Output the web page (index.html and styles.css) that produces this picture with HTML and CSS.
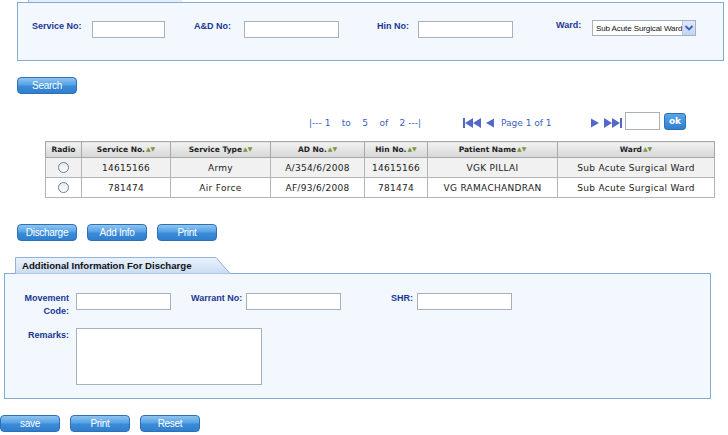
FILE: index.html
```html
<!DOCTYPE html>
<html>
<head>
<meta charset="utf-8">
<title>Discharge</title>
<link rel="stylesheet" href="styles.css">
</head>
<body>
<div class="tabstub"></div>
<div class="panel search-panel">
  <div class="fields">
    <label class="lbl l1">Service No:</label><input class="txt w73" type="text">
    <label class="lbl l2">A&amp;D No:</label><input class="txt w95" type="text">
    <label class="lbl l3">Hin No:</label><input class="txt w95" type="text">
    <label class="lbl l4">Ward:</label>
    <div class="select"><span class="sel-text">Sub Acute Surgical Ward</span><span class="sel-arrow"><svg width="10" height="8" viewBox="0 0 10 8"><path d="M1.5 2 L5 5.5 L8.5 2" fill="none" stroke="#3b5fc4" stroke-width="1.8"/></svg></span></div>
  </div>
</div>
<div class="btnrow search-row"><button class="btn">Search</button></div>
<div class="pager">
  <span class="range">|--- 1 &nbsp;&nbsp; to &nbsp;&nbsp; 5 &nbsp;&nbsp; of &nbsp;&nbsp; 2 ---|</span>
  <svg class="ic first" width="19" height="10" viewBox="0 0 19 10"><rect x="0" y="0" width="2" height="10" fill="#5468cc"/><path d="M2 5 L10 0 L10 10 Z M10 5 L18 0 L18 10 Z" fill="#5468cc"/></svg>
  <svg class="ic prev" width="8" height="10" viewBox="0 0 8 10"><path d="M0 5 L8 0.5 L8 9.5 Z" fill="#5468cc"/></svg>
  <span class="pageof">Page 1 of 1</span>
  <svg class="ic next" width="8" height="10" viewBox="0 0 8 10"><path d="M8 5 L0 0.5 L0 9.5 Z" fill="#5468cc"/></svg>
  <svg class="ic last" width="18" height="10" viewBox="0 0 18 10"><path d="M0 0 L8 5 L0 10 Z M8 0 L16 5 L8 10 Z" fill="#5468cc"/><rect x="16" y="0" width="2" height="10" fill="#5468cc"/></svg>
  <input class="txt pagebox" type="text">
  <button class="okbtn">ok</button>
</div>
<table class="grid">
  <colgroup>
    <col style="width:36px"><col style="width:89px"><col style="width:100px"><col style="width:94px"><col style="width:63px"><col style="width:130px"><col>
  </colgroup>
  <thead>
    <tr>
      <th>Radio</th>
      <th>Service No.<span class="sort">▲▼</span></th>
      <th>Service Type<span class="sort">▲▼</span></th>
      <th>AD No.<span class="sort">▲▼</span></th>
      <th>Hin No.<span class="sort">▲▼</span></th>
      <th>Patient Name<span class="sort">▲▼</span></th>
      <th>Ward<span class="sort">▲▼</span></th>
    </tr>
  </thead>
  <tbody>
    <tr class="odd">
      <td><input class="radio" type="radio" name="r"></td>
      <td>14615166</td><td>Army</td><td>A/354/6/2008</td><td>14615166</td><td>VGK PILLAI</td><td>Sub Acute Surgical Ward</td>
    </tr>
    <tr>
      <td><input class="radio" type="radio" name="r"></td>
      <td>781474</td><td>Air Force</td><td>AF/93/6/2008</td><td>781474</td><td>VG RAMACHANDRAN</td><td>Sub Acute Surgical Ward</td>
    </tr>
  </tbody>
</table>
<div class="btnrow actions">
  <button class="btn">Discharge</button><button class="btn">Add Info</button><button class="btn">Print</button>
</div>
<div class="tab">
  <svg class="tab-bg" width="216" height="17" viewBox="0 0 216 17" preserveAspectRatio="none">
    <defs><linearGradient id="tg" x1="0" y1="0" x2="0" y2="1"><stop offset="0" stop-color="#eaf2fc"/><stop offset="1" stop-color="#c9dcf3"/></linearGradient></defs>
    <path d="M0.5 17 L0.5 0.5 L201 0.5 L215.5 17 Z" fill="url(#tg)" stroke="#93b3d8" stroke-width="1"/>
  </svg>
  <span class="tab-title">Additional Information For Discharge</span>
</div>
<div class="panel info-panel">
  <div class="info-row">
    <label class="lbl ilbl">Movement<br>Code:</label><input class="txt w95" type="text">
    <label class="lbl wlbl">Warrant No:</label><input class="txt w95" type="text">
    <label class="lbl slbl">SHR:</label><input class="txt w95" type="text">
  </div>
  <div class="info-row remarks">
    <label class="lbl ilbl">Remarks:</label><textarea class="area"></textarea>
  </div>
</div>
<div class="btnrow bottom">
  <button class="btn">save</button><button class="btn">Print</button><button class="btn">Reset</button>
</div>
</body>
</html>
```
FILE: styles.css
```css
* { box-sizing: border-box; }
body {
  margin: 0;
  width: 728px;
  background: #ffffff;
  font-family: "DejaVu Sans", "Liberation Sans", sans-serif;
  color: #222;
}
.tabstub {
  margin-left: 28px;
  width: 154px;
  height: 2px;
  background: #e3edf9;
  border-left: 1px solid #9ab8da;
}
.panel {
  background: #f2f8fd;
  border: 1px solid #86abd0;
}
.search-panel {
  margin-left: 17px;
  width: 707px;
  height: 59px;
  padding: 18px 0 0 14px;
}
.fields {
  display: flex;
  align-items: flex-start;
}
.lbl {
  font-family: "Liberation Sans", sans-serif;
  font-weight: bold;
  font-size: 9px;
  line-height: 11px;
  color: #1b3696;
  white-space: nowrap;
}
.l1 { width: 60px; margin-top: 0; }
.l2 { width: 50px; margin-left: 29px; margin-top: 0; }
.l3 { width: 41px; margin-left: 38px; margin-top: 0; }
.l4 { width: 36px; margin-left: 43px; margin-top: -1px; }
.txt {
  height: 17px;
  border: 1px solid #a9b1b8;
  background: #fff;
  padding: 0 2px;
  margin: 0;
  font-size: 10px;
}
.w73 { width: 73px; }
.w95 { width: 95px; }
.select {
  width: 104px;
  height: 16px;
  margin-top: -1px;
  border: 1px solid #a9b1b8;
  background: #fff;
  display: flex;
  align-items: center;
  padding-left: 3px;
  overflow: hidden;
}
.sel-text {
  flex: 1 1 auto;
  min-width: 0;
  overflow: hidden;
  font-family: "Liberation Sans", sans-serif;
  font-size: 8px;
  letter-spacing: -0.1px;
  color: #111;
  white-space: nowrap;
}
.sel-arrow {
  flex: none;
  width: 13px;
  height: 14px;
  background: linear-gradient(#dfe9fb, #c2d5f4);
  border-left: 1px solid #b9c9e6;
  display: flex;
  align-items: center;
  justify-content: center;
}
.btnrow {
  display: flex;
  gap: 10px;
}
.btn {
  width: 60px;
  height: 17px;
  margin: 0;
  padding: 0;
  border: 1px solid #2f6fb4;
  border-radius: 4px;
  background: linear-gradient(#8ec5f1 0%, #56a2e4 45%, #3a8bd8 55%, #2f7fcf 100%);
  color: #fff;
  font-family: "Liberation Sans Narrow", "Liberation Sans", sans-serif;
  font-size: 10px;
  line-height: 15px;
  letter-spacing: -0.3px;
}
.search-row { margin: 16px 0 0 17px; }
.pager {
  display: flex;
  align-items: center;
  height: 18px;
  margin-top: 18px;
  padding-left: 309px;
  font-family: "DejaVu Sans", sans-serif;
  font-size: 9px;
  color: #3d5fc2;
}
.range { width: 116px; white-space: nowrap; margin-top: 4px; }
.ic { display: block; flex: none; margin-top: 4px; }
.first { margin-left: 38px; }
.prev { margin-left: 4px; }
.pageof { margin-left: 7px; width: 51px; white-space: nowrap; margin-top: 3px; }
.next { margin-left: 39px; }
.last { margin-left: 5px; }
.pagebox { width: 35px; height: 18px; margin-left: 3px; }
.okbtn {
  margin-left: 4px;
  width: 22px;
  height: 17px;
  padding: 0;
  border: 1px solid #2f6fb4;
  border-radius: 3px;
  background: linear-gradient(#5aa6ea, #2e7fd0);
  color: #fff;
  font-family: "DejaVu Sans", sans-serif;
  font-weight: bold;
  font-size: 9px;
}
.grid {
  margin: 11px 0 0 45px;
  width: 670px;
  border-collapse: collapse;
  table-layout: fixed;
  border: 1px solid #9a9a9a;
}
.grid th {
  height: 16px;
  padding: 0;
  border: 1px solid #a8a8a8;
  background: linear-gradient(#f2f2f2, #d6d6d6);
  font-family: "DejaVu Sans", sans-serif;
  font-size: 7.5px;
  font-weight: bold;
  color: #222;
  text-align: center;
  white-space: nowrap;
}
.sort {
  font-size: 6px;
  color: #7c9440;
  margin-left: 1px;
  vertical-align: 1px;
}
.grid td {
  height: 20px;
  padding: 0;
  border: 1px solid #b4b4b4;
  font-family: "DejaVu Sans", sans-serif;
  font-size: 9px;
  letter-spacing: 0.3px;
  color: #222;
  text-align: center;
  white-space: nowrap;
}
.grid tr.odd td { background: #f1f1f1; }
.radio {
  appearance: none;
  -webkit-appearance: none;
  width: 11px;
  height: 11px;
  margin: 0;
  vertical-align: middle;
  border: 1px solid #6d7f92;
  border-radius: 50%;
  background: linear-gradient(#e6eaee, #ffffff);
}
.actions { margin: 26px 0 0 17px; }
.tab {
  position: relative;
  margin: 16px 0 0 15px;
  width: 216px;
  height: 17px;
  display: flex;
  align-items: center;
  padding-left: 7px;
}
.tab-bg { position: absolute; left: 0; top: 0; }
.tab-title {
  position: relative;
  font-family: "Liberation Sans", sans-serif;
  font-weight: bold;
  font-size: 9.6px;
  color: #111;
  white-space: nowrap;
}
.info-panel {
  margin-left: 4px;
  margin-top: -1px;
  width: 707px;
  height: 126px;
  padding: 19px 0 0 0;
}
.info-row {
  display: flex;
  align-items: flex-start;
}
.ilbl { width: 64px; text-align: right; margin-right: 7px; line-height: 13px; margin-top: -1px; }
.wlbl { width: 48px; margin-left: 20px; margin-right: 7px; margin-top: 0; }
.slbl { width: 26px; margin-left: 50px; margin-top: 0; }
.remarks { margin-top: 10px; }
.remarks .ilbl { margin-top: 1px; }
.area {
  width: 186px;
  height: 57px;
  margin: 0;
  border: 1px solid #a9b1b8;
  background: #fff;
  resize: none;
}
.bottom { margin-top: 16px; }
```
